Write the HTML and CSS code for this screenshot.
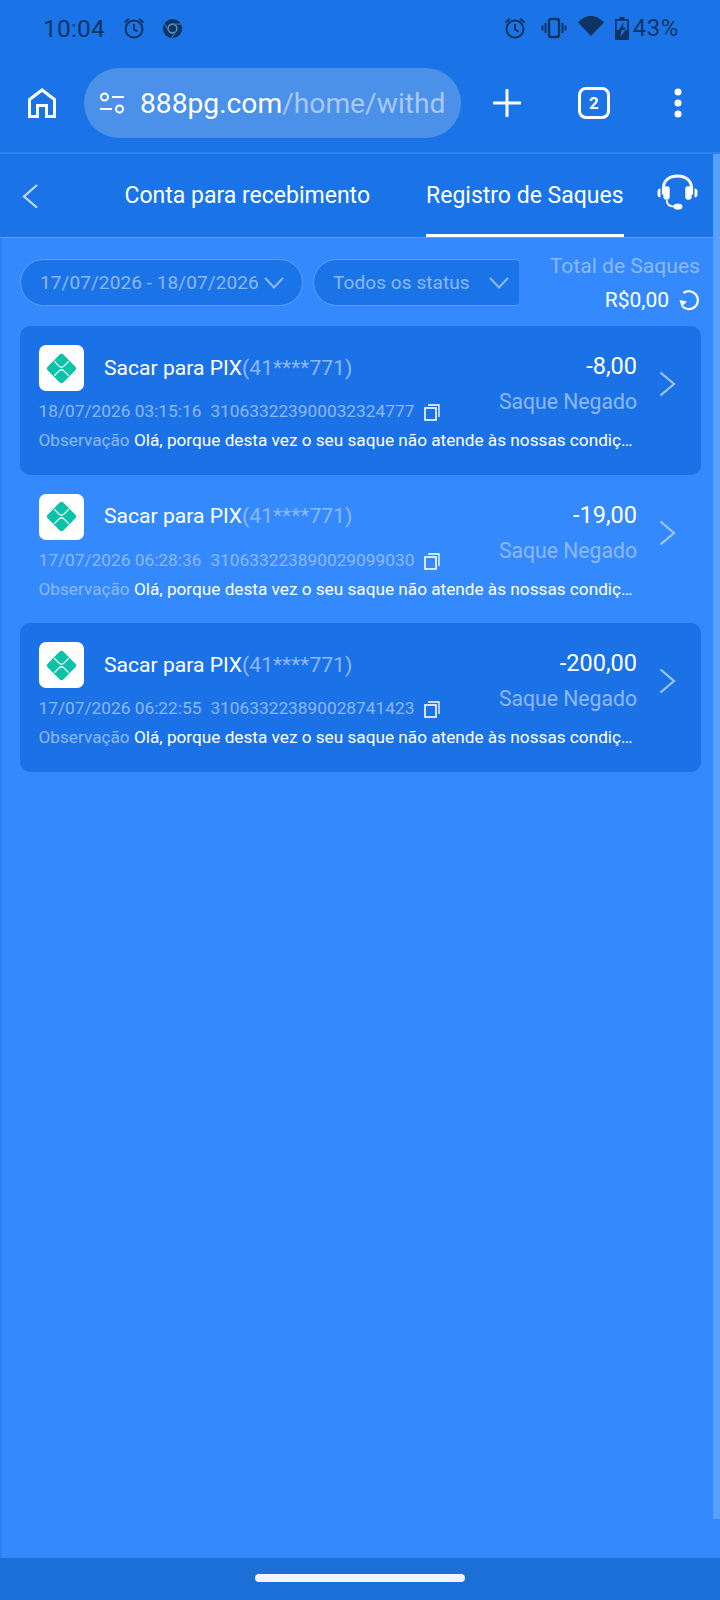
FILE: index.html
```html
<!DOCTYPE html>
<html lang="pt">
<head>
<meta charset="utf-8">
<title>Registro de Saques</title>
<link rel="stylesheet" href="styles.css">
</head>
<body>
<div class="phone">
  <header class="chrome">
    <div class="status">
      <div class="status-left">
        <span class="clock">10:04</span>
        <svg class="st-ic alarm" viewBox="0 0 24 24"><circle cx="12" cy="13" r="8.500" fill="none" stroke="currentColor" stroke-width="2"/><path d="M12 8v5.500l3.500 2.200M2.500 6.500l4.500-3.700M21.500 6.500L17 2.800" fill="none" stroke="currentColor" stroke-width="2"/></svg>
        <svg class="st-ic chromeic" viewBox="0 0 24 24"><circle cx="12" cy="12" r="11" fill="currentColor"/><circle cx="12" cy="12" r="5" fill="#0f3463" stroke="#5f8fcc" stroke-width="1.800"/><path d="M12 7h10M7.700 14.500L2.700 6M16.300 14.500L11 23" stroke="#3f6fae" stroke-width="1.200" fill="none"/></svg>
      </div>
      <div class="status-right">
        <svg class="st-ic alarm" viewBox="0 0 24 24"><circle cx="12" cy="13" r="8.500" fill="none" stroke="currentColor" stroke-width="2"/><path d="M12 8v5.500l3.500 2.200M2.500 6.500l4.500-3.700M21.500 6.500L17 2.800" fill="none" stroke="currentColor" stroke-width="2"/></svg>
        <svg class="st-ic vib" viewBox="0 0 26 24"><rect x="8" y="3" width="10" height="18" rx="2" fill="none" stroke="currentColor" stroke-width="2.400"/><path d="M4.500 7v10M1.500 9.500v5M21.500 7v10M24.500 9.500v5" stroke="currentColor" stroke-width="2" fill="none"/></svg>
        <svg class="st-ic wifi" viewBox="0 0 26 22"><path d="M0 7.500C3.500 3.500 8 1 13 1s9.500 2.500 13 6.500L13 21z" fill="currentColor"/></svg>
        <svg class="st-ic batt" viewBox="0 0 14 23"><path d="M4.500 0h5v2H13a1 1 0 0 1 1 1v19a1 1 0 0 1-1 1H1a1 1 0 0 1-1-1V3a1 1 0 0 1 1-1h3.500z" fill="currentColor"/><path d="M1.800 3.800h10.400V13H1.800z" fill="#1a74e8"/><path d="M8.500 5L3.800 13h6l.8-2.500H8z" fill="currentColor"/><path d="M3.800 13h2.800L5.500 20 10.400 13z" fill="#1a74e8"/></svg>
        <span class="pct">43%</span>
      </div>
    </div>
    <div class="toolbar">
      <svg class="home" viewBox="0 0 28 30"><path d="M1.500 28.500V11.500L14 2l12.500 9.500v17H18.500v-11h-9v11z" fill="none" stroke="#fff" stroke-width="3"/></svg>
      <div class="omnibox">
        <svg class="tune" viewBox="0 0 26 22"><circle cx="5.500" cy="5" r="3.500" fill="none" stroke="#fff" stroke-width="2"/><circle cx="20.500" cy="17" r="3.500" fill="none" stroke="#fff" stroke-width="2"/><path d="M13 5h12M1 17h12" stroke="#fff" stroke-width="2.200"/></svg>
        <span class="url"><span class="host">888pg.com</span><span class="path">/home/withd</span></span>
      </div>
      <svg class="plus" viewBox="0 0 28 28"><path d="M14 1v26M1 14h26" stroke="#fff" stroke-width="3" stroke-linecap="round"/></svg>
      <div class="tabs-count">2</div>
      <svg class="dots" viewBox="0 0 8 30"><circle cx="4" cy="4" r="3.500" fill="#fff"/><circle cx="4" cy="15" r="3.500" fill="#fff"/><circle cx="4" cy="26" r="3.500" fill="#fff"/></svg>
    </div>
  </header>
  <div class="page">
    <div class="content">
      <nav class="tabbar">
        <svg class="back" viewBox="0 0 16 24"><path d="M15 1L2 12.500 15 23.500" fill="none" stroke="#c3d9f8" stroke-width="2.200"/></svg>
        <a class="tab tab-a">Conta para recebimento</a>
        <a class="tab tab-b">Registro de Saques</a>
        <svg class="support" viewBox="0 0 42 38"><path d="M6.500 21v-6.500C6.500 6.500 13 2 21 2s14.500 4.500 14.500 12.500V21" fill="none" stroke="#fff" stroke-width="3"/><rect x="6.500" y="12.500" width="6.500" height="14" rx="2.500" fill="#fff"/><rect x="29" y="12.500" width="6.500" height="14" rx="2.500" fill="#fff"/><path d="M3.500 15v9a3 3 0 0 1-3-3v-3a3 3 0 0 1 3-3zM38.500 15v9a3 3 0 0 0 3-3v-3a3 3 0 0 0-3-3z" fill="#fff"/><path d="M10 27c0 4 2 6.500 8 6.500" fill="none" stroke="#fff" stroke-width="2"/><rect x="17" y="30.500" width="9" height="6" rx="3" fill="#fff"/></svg>
      </nav>
      <section class="filters">
        <div class="pill pill-date"><span>17/07/2026 - 18/07/2026</span><svg class="chev" viewBox="0 0 20 12"><path d="M1 1l9 9.500L19 1" fill="none" stroke="#8db8f5" stroke-width="2"/></svg></div>
        <div class="pill pill-status"><span>Todos os status</span><svg class="chev" viewBox="0 0 20 12"><path d="M1 1l9 9.500L19 1" fill="none" stroke="#8db8f5" stroke-width="2"/></svg></div>
        <div class="total">
          <div class="total-label">Total de Saques</div>
          <div class="total-val"><span>R$0,00</span><svg class="refresh" viewBox="0 0 22 22"><path d="M5.500 4A9 9 0 1 1 4.500 17.500" fill="none" stroke="#fff" stroke-width="2.200"/><path d="M1 11.500h7.500L4.500 18z" fill="#fff" transform="rotate(12 4 14)"/></svg></div>
        </div>
      </section>
      <section class="list">
        <article class="row row-dark">
          <div class="main">
            <div class="top"><span class="logo"><svg viewBox="0 0 32 32"><path d="M16 4L28 16 16 28 4 16z" fill="#0cc2a8" stroke="#0cc2a8" stroke-width="6" stroke-linejoin="round"/><path d="M8.500 8.500L13.500 13.500q2.500 2.500 5 0l5-5M8.500 23.500L13.500 18.500q2.500-2.500 5 0l5 5" fill="none" stroke="#fff" stroke-width="1.300"/></svg></span><span class="title">Sacar para PIX<span class="acct">(41****771)</span></span></div>
            <div class="meta"><span class="date">18/07/2026 03:15:16</span><span class="txid">310633223900032324777</span><svg class="copy" viewBox="0 0 16 17"><rect x="1" y="4" width="11" height="12" fill="none" stroke="#fff" stroke-width="1.600"/><path d="M4 1h11v12" fill="none" stroke="#fff" stroke-width="1.300"/></svg></div>
            <div class="note"><span class="note-label">Observação</span> Olá, porque desta vez o seu saque não atende às nossas condições de saque, por favor verifique</div>
          </div>
          <div class="side"><div class="amount">-8,00</div><div class="state">Saque Negado</div></div>
          <svg class="arrow" viewBox="0 0 17 26"><path d="M1.500 1.500L15 13 1.500 24.500" fill="none" stroke="#a3c4f5" stroke-width="2.200"/></svg>
        </article>
        <article class="row">
          <div class="main">
            <div class="top"><span class="logo"><svg viewBox="0 0 32 32"><path d="M16 4L28 16 16 28 4 16z" fill="#0cc2a8" stroke="#0cc2a8" stroke-width="6" stroke-linejoin="round"/><path d="M8.500 8.500L13.500 13.500q2.500 2.500 5 0l5-5M8.500 23.500L13.500 18.500q2.500-2.500 5 0l5 5" fill="none" stroke="#fff" stroke-width="1.300"/></svg></span><span class="title">Sacar para PIX<span class="acct">(41****771)</span></span></div>
            <div class="meta"><span class="date">17/07/2026 06:28:36</span><span class="txid">310633223890029099030</span><svg class="copy" viewBox="0 0 16 17"><rect x="1" y="4" width="11" height="12" fill="none" stroke="#fff" stroke-width="1.600"/><path d="M4 1h11v12" fill="none" stroke="#fff" stroke-width="1.300"/></svg></div>
            <div class="note"><span class="note-label">Observação</span> Olá, porque desta vez o seu saque não atende às nossas condições de saque, por favor verifique</div>
          </div>
          <div class="side"><div class="amount">-19,00</div><div class="state">Saque Negado</div></div>
          <svg class="arrow" viewBox="0 0 17 26"><path d="M1.500 1.500L15 13 1.500 24.500" fill="none" stroke="#a3c4f5" stroke-width="2.200"/></svg>
        </article>
        <article class="row row-dark">
          <div class="main">
            <div class="top"><span class="logo"><svg viewBox="0 0 32 32"><path d="M16 4L28 16 16 28 4 16z" fill="#0cc2a8" stroke="#0cc2a8" stroke-width="6" stroke-linejoin="round"/><path d="M8.500 8.500L13.500 13.500q2.500 2.500 5 0l5-5M8.500 23.500L13.500 18.500q2.500-2.500 5 0l5 5" fill="none" stroke="#fff" stroke-width="1.300"/></svg></span><span class="title">Sacar para PIX<span class="acct">(41****771)</span></span></div>
            <div class="meta"><span class="date">17/07/2026 06:22:55</span><span class="txid">310633223890028741423</span><svg class="copy" viewBox="0 0 16 17"><rect x="1" y="4" width="11" height="12" fill="none" stroke="#fff" stroke-width="1.600"/><path d="M4 1h11v12" fill="none" stroke="#fff" stroke-width="1.300"/></svg></div>
            <div class="note"><span class="note-label">Observação</span> Olá, porque desta vez o seu saque não atende às nossas condições de saque, por favor verifique</div>
          </div>
          <div class="side"><div class="amount">-200,00</div><div class="state">Saque Negado</div></div>
          <svg class="arrow" viewBox="0 0 17 26"><path d="M1.500 1.500L15 13 1.500 24.500" fill="none" stroke="#a3c4f5" stroke-width="2.200"/></svg>
        </article>
      </section>
    </div>
    <div class="scrollbar"><div class="thumb"></div></div>
  </div>
  <footer class="gesture"><div class="handle"></div></footer>
</div>
</body>
</html>
```

FILE: styles.css
```css
* { box-sizing: border-box; }
html, body { margin: 0; padding: 0; }
body { width: 720px; height: 1600px; overflow: hidden; font-family: Roboto, "Liberation Sans", sans-serif; background: #348afc; color: #fff; }
svg { display: block; flex: none; }
.phone { width: 720px; height: 1600px; display: flex; flex-direction: column; }

.chrome { height: 154px; flex: none; background: #1a74e8; border-bottom: 2px solid #2f81ef; }
.status { height: 68px; padding: 11px 41px 0 43px; display: flex; justify-content: space-between; align-items: flex-start; color: #0f3463; }
.status-left, .status-right { display: flex; align-items: center; height: 34px; }
.clock { font-size: 24.500px; width: 79px; letter-spacing: .2px; }
.alarm { width: 24px; height: 24px; }
.chromeic { width: 21px; height: 21px; margin-left: 16px; }
.vib { width: 26px; height: 24px; margin-left: 14px; }
.wifi { width: 26px; height: 22px; margin-left: 11px; margin-top: -4px; }
.batt { width: 14px; height: 23px; margin-left: 11px; }
.pct { font-size: 24px; margin-left: 4px; letter-spacing: .6px; }

.toolbar { height: 70px; padding: 0 0 0 28px; display: flex; align-items: center; }
.home { width: 28px; height: 30px; }
.omnibox { width: 377px; height: 70px; margin-left: 28px; border-radius: 35px; background: #4b90e9; display: flex; align-items: center; padding-left: 15px; }
.tune { width: 26px; height: 22px; }
.url { font-size: 28.200px; margin-left: 15px; white-space: nowrap; }
.host { color: #fff; }
.path { color: #a8c9f5; }
.plus { width: 28px; height: 28px; margin-left: 32px; }
.tabs-count { width: 32px; height: 32px; margin-left: 57px; border: 3px solid #fff; border-radius: 8px; font-size: 17px; font-weight: 700; display: flex; align-items: center; justify-content: center; }
.dots { width: 8px; height: 30px; margin-left: 64px; }

.page { flex: 1; display: flex; min-height: 0; }
.content { flex: 1; min-width: 0; border-left: 2px solid #2b7ff0; }
.scrollbar { width: 7px; flex: none; background: #58a0fd; height: 1365px; }

.tabbar { height: 84px; margin-left: -2px; background: #1a74e8; border-bottom: 1px solid #5a9ff5; display: flex; align-items: center; }
.back { width: 16px; height: 24px; margin-left: 22px; }
.tab { font-size: 23px; color: #fff; line-height: 84px; height: 83px; white-space: nowrap; }
.tab-a { margin-left: 86.500px; }
.tab-b { margin-left: 56px; border-bottom: 3px solid #fff; }
.support { width: 41px; height: 37px; margin-left: 33px; margin-top: -6px; }

.filters { height: 88px; padding-left: 18px; padding-right: 13px; display: flex; align-items: flex-start; }
.pill { height: 47px; margin-top: 21px; background: #1a74e8; border: 1px solid #5a9ff5; display: flex; align-items: center; font-size: 19px; color: #8db8f5; white-space: nowrap; letter-spacing: .08px; }
.pill-date { width: 283px; border-radius: 24px; padding-left: 19px; }
.pill-date .chev { margin-left: 5px; }
.pill-status { width: 206px; margin-left: 10px; border-radius: 24px 4px 4px 24px; padding-left: 19px; border-right: none; }
.pill-status .chev { margin-left: 19px; }
.chev { width: 20px; height: 12px; }
.total { flex: 1; text-align: right; padding-top: 15px; }
.total-label { font-size: 21.100px; color: #8db8f5; line-height: 26px; white-space: nowrap; }
.total-val { display: flex; justify-content: flex-end; align-items: center; font-size: 21px; margin-top: 9px; height: 24px; }
.refresh { width: 22px; height: 22px; margin-left: 9px; }

.list { padding-left: 17.500px; padding-right: 12.500px; }
.row { height: 148.500px; border-radius: 10px; padding: 19px 0 0 19.500px; display: flex; align-items: flex-start; }
.row-dark { background: #1b72e6; }
.main { width: 598px; flex: none; }
.top { display: flex; align-items: center; height: 46px; }
.logo { width: 45px; height: 46px; background: #fff; border-radius: 7px; display: flex; align-items: center; justify-content: center; }
.logo svg { width: 31px; height: 31px; }
.title { font-size: 21.100px; margin-left: 20px; margin-top: -2px; white-space: nowrap; }
.acct { color: #8db8f5; }
.meta { display: flex; align-items: center; height: 24px; margin: 8px 0 0 -.5px; font-size: 17.300px; color: #8db8f5; white-space: nowrap; }
.txid { margin-left: 9px; }
.copy { width: 16px; height: 17px; margin-left: 10px; margin-top: 3px; }
.note { margin: 5px 0 0 -.5px; font-size: 17.200px; line-height: 24px; white-space: nowrap; overflow: hidden; text-overflow: ellipsis; width: 599px; }
.note-label { color: #8db8f5; }
.side { width: 0; flex: none; display: flex; flex-direction: column; align-items: flex-end; }
.amount { font-size: 23.500px; line-height: 30px; margin-top: 6px; white-space: nowrap; }
.state { font-size: 21.200px; line-height: 26px; margin-top: 8px; color: #8db8f5; white-space: nowrap; }
.arrow { width: 17px; height: 26px; margin-left: 22px; margin-top: 26px; }

.gesture { height: 42px; flex: none; background: #1b6fd6; display: flex; justify-content: center; padding-top: 16px; }
.handle { width: 210px; height: 8px; border-radius: 4px; background: #eef5fd; }
```
